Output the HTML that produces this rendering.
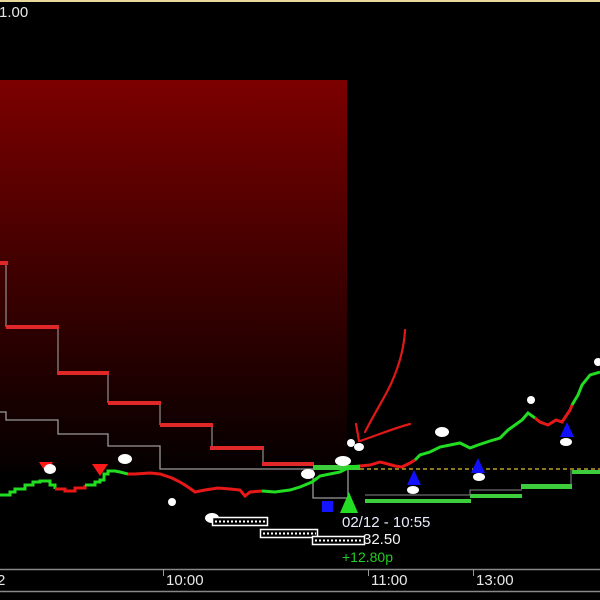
<!DOCTYPE html>
<html><head><meta charset="utf-8"><style>
html,body{margin:0;padding:0;background:#000;width:600px;height:600px;overflow:hidden}
svg{display:block}
text{font-family:"Liberation Sans",sans-serif}
</style></head><body>
<svg width="600" height="600" viewBox="0 0 600 600" xmlns="http://www.w3.org/2000/svg">
<defs>
<linearGradient id="g" x1="0" y1="0" x2="0" y2="1">
<stop offset="0" stop-color="#7c0000"/>
<stop offset="0.45" stop-color="#440000"/>
<stop offset="0.8" stop-color="#1a0000"/>
<stop offset="1" stop-color="#040000"/>
</linearGradient>
</defs>
<rect x="0" y="0" width="600" height="600" fill="#000"/>
<rect x="0" y="0" width="600" height="2" fill="#e8d89a"/>
<text x="-1" y="17" font-size="15" fill="#e8e8e8">1.00</text>
<rect x="0" y="80" width="347" height="392" fill="url(#g)"/>
<path d="M0 412 H6 V420 H58 V434 H108 V446 H160 V469 H313 V498 H348 V470" fill="none" stroke="#9a9a9a" stroke-width="1.3"/>
<path d="M6 263 V327 M58 327 V373 M108 373 V403 M160 403 V425 M212 425 V448 M263 448 V464" stroke="#909090" stroke-width="1.2" fill="none"/>
<g fill="#e02828">
<rect x="0" y="261" width="8" height="4"/>
<rect x="6" y="325" width="53" height="4"/>
<rect x="57" y="371" width="52" height="4"/>
<rect x="108" y="401" width="53" height="4"/>
<rect x="160" y="423" width="53" height="4"/>
<rect x="210" y="446" width="54" height="4"/>
<rect x="262" y="462" width="52" height="4"/>
</g>
<line x1="360" y1="469" x2="600" y2="469" stroke="#e0c030" stroke-width="1.3" stroke-dasharray="4,3"/>
<g fill="#3ccc3c">
<rect x="313" y="465" width="47" height="5"/>
<rect x="365" y="499" width="106" height="4"/>
<rect x="470" y="494" width="52" height="4"/>
<rect x="521" y="484" width="51" height="5"/>
<rect x="572" y="470" width="28" height="4"/>
</g>
<path d="M365 495 H470 V490 H522" stroke="#888" fill="none" stroke-width="1"/>
<path d="M571 484 V470" stroke="#888" fill="none" stroke-width="1"/>
<g fill="none" stroke-width="3" stroke-linejoin="miter">
<polyline stroke="#22dd22" points="0,495 10,495 10,492 15,492 15,489 25,489 25,485 33,485 33,482 40,482 40,481 50,481 50,485 55,485 55,489"/>
<polyline stroke="#e81818" points="55,489 65,489 65,491 75,491 75,488 85,488 85,485"/>
<polyline stroke="#22dd22" points="85,485 95,485 95,482 100,482 100,480 104,480 104,474 108,474 108,471 115,471 120,472 128,474"/>
<polyline stroke="#e81818" points="128,474 135,474 150,473 160,474 172,478 180,482 188,487 195,492 205,490 218,488 230,489 240,490 245,496 250,492 262,491"/>
<polyline stroke="#22dd22" points="262,491 275,492 290,490 300,487 312,482 320,476 330,474 340,472 350,467 360,466"/>
<polyline stroke="#e81818" points="360,466 370,465 380,462 388,464 395,466 402,467 410,463 415,460"/>
<polyline stroke="#22dd22" points="415,460 420,455 430,452 440,447 450,445 460,443 470,448 478,445 490,441 500,438 508,430 515,425 522,420 528,413 535,418"/>
<polyline stroke="#e81818" points="535,418 540,422 548,425 556,420 562,422 570,410 572,405"/>
<polyline stroke="#22dd22" points="572,405 578,395 582,385 590,375 600,372"/>
</g>
<polygon points="39,462 53,462 46,473" fill="#ff1a1a"/>
<polygon points="92,464 108,464 100,476" fill="#ff1a1a"/>
<polygon points="340,513 358,513 349,492" fill="#22dd22"/>
<polygon points="407,485 421,485 414,470" fill="#1010ff"/>
<polygon points="471,473 485,473 478,458" fill="#1010ff"/>
<polygon points="560,437 574,437 567,422" fill="#1010ff"/>
<rect x="322" y="501" width="11" height="11" fill="#1414ff"/>
<g fill="#fff">
<ellipse cx="50" cy="469" rx="6" ry="5"/>
<ellipse cx="125" cy="459" rx="7" ry="5"/>
<ellipse cx="172" cy="502" rx="4" ry="4"/>
<ellipse cx="308" cy="474" rx="7" ry="5"/>
<ellipse cx="343" cy="461" rx="8" ry="5"/>
<ellipse cx="351" cy="443" rx="4" ry="4"/>
<ellipse cx="359" cy="447" rx="5" ry="4"/>
<ellipse cx="442" cy="432" rx="7" ry="5"/>
<ellipse cx="413" cy="490" rx="6" ry="4"/>
<ellipse cx="479" cy="477" rx="6" ry="4"/>
<ellipse cx="531" cy="400" rx="4" ry="4"/>
<ellipse cx="566" cy="442" rx="6" ry="4"/>
<ellipse cx="598" cy="362" rx="4" ry="4"/>
<ellipse cx="212" cy="518" rx="7" ry="5"/>
</g>
<g stroke="#fff" fill="#000" stroke-width="1.5">
<rect x="212.5" y="517.5" width="55" height="8"/>
<rect x="260.5" y="529.5" width="57" height="8"/>
<rect x="312.5" y="536.5" width="52" height="8"/>
</g>
<g stroke="#fff" stroke-width="2" stroke-dasharray="2,2">
<line x1="215" y1="521.5" x2="266" y2="521.5"/>
<line x1="263" y1="533.5" x2="316" y2="533.5"/>
<line x1="315" y1="540.5" x2="363" y2="540.5"/>
</g>
<g stroke="#e01818" stroke-width="2.2" fill="none" stroke-linecap="round">
<path d="M405 330 C404 350 398 370 388 390 C380 405 372 418 365 432"/>
<path d="M410 424 C395 428 380 434 360 441"/>
<path d="M356 424 L359 441"/>
</g>
<text x="342" y="527" font-size="15" fill="#e8ecff">02/12 - 10:55</text>
<text x="363" y="544" font-size="15" fill="#f4f4f4">32.50</text>
<text x="342" y="562" font-size="14" fill="#22cc22">+12.80p</text>
<line x1="0" y1="569.5" x2="600" y2="569.5" stroke="#888" stroke-width="1.5"/>
<line x1="0" y1="591.5" x2="600" y2="591.5" stroke="#888" stroke-width="1.5"/>
<g stroke="#999" stroke-width="1"><line x1="163.5" y1="569" x2="163.5" y2="576"/><line x1="368.5" y1="569" x2="368.5" y2="576"/><line x1="473.5" y1="569" x2="473.5" y2="576"/></g>
<g font-size="15" fill="#e8e8e8">
<text x="-3" y="585">2</text>
<text x="166" y="585">10:00</text>
<text x="371" y="585">11:00</text>
<text x="476" y="585">13:00</text>
</g>
</svg>
</body></html>
